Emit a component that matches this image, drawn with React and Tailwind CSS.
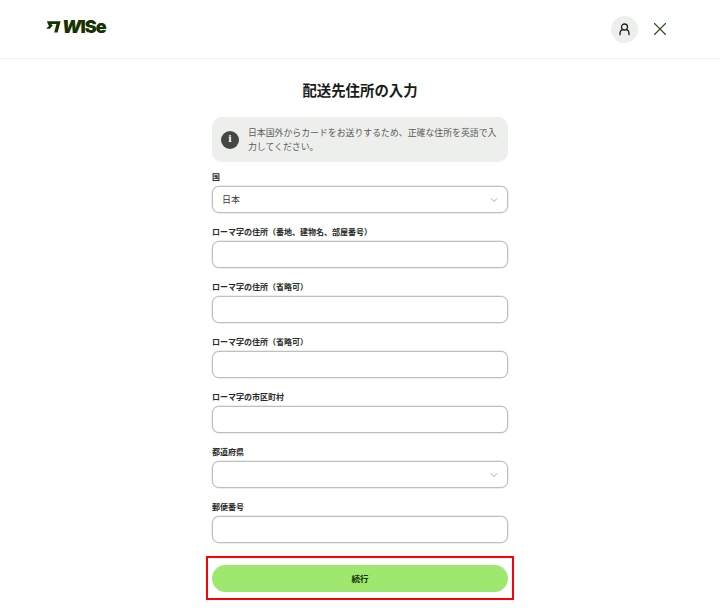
import { ChevronDown, X } from "lucide-react";

const jp = { fontFamily: '"Noto Sans CJK JP", Inter, sans-serif' };

function Field({ label, select, value }) {
  return (
    <div className="mb-[13px]">
      <label className="block h-[15px] text-[8px] leading-[12px] font-bold text-[#2a2c29]">{label}</label>
      <div className="flex items-center justify-between w-full h-[27px] px-[9px] bg-white border border-[#bfc0bd] rounded-[7px] shadow-[0_0_0_0.5px_#dcdcda]">
        <span className="text-[9px] text-[#37392f]">{value}</span>
        {select && <ChevronDown className="w-[12px] h-[12px] -mr-[2px] text-[#8e908c]" strokeWidth={1.5} />}
      </div>
    </div>
  );
}

export default function App() {
  return (
    <div className="w-[720px] h-[610px] bg-white overflow-hidden" style={jp}>
      <header className="flex items-center justify-between h-[59px] pl-[46px] pr-[49px] border-b border-[#efefed]">
        <div className="flex items-center -mt-[5px] h-[20px]">
          <svg width="15" height="13" viewBox="0 0 15 13" className="mr-[1px]">
            <path d="M1 1.2h13.6L11.6 12.4H8.2L10.4 3.9H5.2L6.8 5.6 3.9 8.8H.2L3 6 1.8 3.7z" fill="#163300" />
          </svg>
          <span className="text-[18px] leading-none font-black tracking-[-1px] text-[#163300]" style={{ fontFamily: "Inter, sans-serif" }}>
            <span className="italic">W</span>ISe
          </span>
        </div>
        <div className="flex items-center gap-[11px]">
          <button className="flex items-center justify-center w-[27px] h-[27px] rounded-full bg-[#edefec]">
            <svg width="13" height="13" viewBox="0 0 13 13" fill="none" stroke="#1f2420" strokeWidth="1.3">
              <circle cx="6.5" cy="4" r="3" />
              <path d="M2 12.2V10.5C2 8.8 3.2 7 4.6 6.6M11 12.2V10.5C11 8.8 9.8 7 8.4 6.6" />
            </svg>
          </button>
          <X className="w-[22px] h-[22px] text-[#2f4a1c]" strokeWidth={1.2} />
        </div>
      </header>
      <main className="w-[296px] mx-auto">
        <h1 className="mt-[20px] h-[38px] text-center text-[14.4px] leading-[22px] font-bold text-[#1a1c1a]">配送先住所の入力</h1>
        <div className="flex items-center gap-[9px] h-[45px] px-[9px] mb-[9px] rounded-[10px] bg-[#edefec]">
          <div className="flex items-center justify-center shrink-0 w-[18px] h-[18px] rounded-full bg-[#454745] text-white text-[9px] font-bold" style={{ fontFamily: '"DejaVu Serif", serif' }}>i</div>
          <p className="text-[8.9px] leading-[14px] text-[#5a5c58]">日本国外からカードをお送りするため、正確な住所を英語で入力してください。</p>
        </div>
        <Field label="国" select value="日本" />
        <Field label="ローマ字の住所（番地、建物名、部屋番号）" />
        <Field label="ローマ字の住所（省略可）" />
        <Field label="ローマ字の住所（省略可）" />
        <Field label="ローマ字の市区町村" />
        <Field label="都道府県" select />
        <Field label="郵便番号" />
        <div className="-mx-[6px] mt-[13px] px-[4px] h-[44px] border-2 border-[#fb0007] flex items-center">
          <button className="w-full h-[27px] rounded-full bg-[#9fe870] text-[8.5px] font-bold text-[#163300]">続行</button>
        </div>
      </main>
    </div>
  );
}
